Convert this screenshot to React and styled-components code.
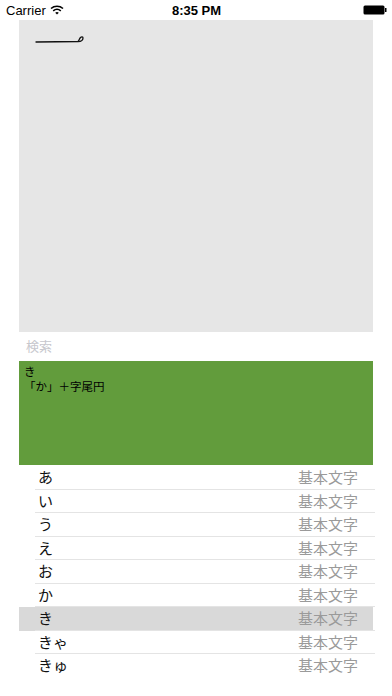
import React from "react";
import styled, { createGlobalStyle } from "styled-components";

const Global = createGlobalStyle`
  html, body { margin: 0; padding: 0; background: #fff; }
  body { font-family: "Liberation Sans", "Noto Sans CJK JP", sans-serif; }
  * { box-sizing: border-box; }
`;

const Screen = styled.div`
  width: 392px;
  height: 696px;
  overflow: hidden;
  background: #fff;
  display: flex;
  flex-direction: column;
`;

const StatusBar = styled.div`
  height: 20px;
  display: grid;
  grid-template-columns: 1fr auto 1fr;
  align-items: center;
  padding: 0 5px 0 6px;
  font-size: 13px;
  color: #000;
`;

const StatusLeft = styled.div`
  display: flex;
  align-items: center;
  gap: 4px;
`;

const Clock = styled.div`
  font-weight: bold;
  font-size: 13px;
`;

const StatusRight = styled.div`
  display: flex;
  justify-content: flex-end;
  align-items: center;
`;

const Body = styled.div`
  width: 354px;
  margin-left: 19px;
  display: flex;
  flex-direction: column;
`;

const Canvas = styled.div`
  height: 312px;
  background: #e6e6e6;
  position: relative;
`;

const Stroke = styled.svg`
  position: absolute;
  left: 15px;
  top: 13px;
`;

const Search = styled.div`
  height: 29px;
  background: #fff;
  display: flex;
  align-items: center;
  padding: 0 0 3px 7px;
  font-family: "Noto Sans CJK JP", sans-serif;
  font-size: 13px;
  color: #c7c7cd;
`;

const Detail = styled.div`
  height: 104px;
  background: #629c3c;
  padding: 3px 0 0 5px;
  font-family: "Noto Sans CJK JP", sans-serif;
  font-size: 11.5px;
  line-height: 15px;
  color: #000;
`;

const List = styled.div`
  display: flex;
  flex-direction: column;
  margin-top: 1px;
`;

const Row = styled.div`
  height: 23.5px;
  display: flex;
  align-items: center;
  justify-content: space-between;
  padding: 0 15px 2px 19px;
  background: ${p => (p.$selected ? "#d9d9d9" : "#fff")};
  position: relative;
  font-family: "Noto Sans CJK JP", sans-serif;
  font-size: 15px;
  &::after {
    content: "";
    position: absolute;
    left: 16px;
    right: -2px;
    bottom: 0;
    height: 1px;
    background: ${p => (p.$last ? "transparent" : "#e4e4e4")};
  }
`;

const Kana = styled.span`
  color: #111;
`;

const Kind = styled.span`
  color: #9a9a9a;
`;

const rows = ["あ", "い", "う", "え", "お", "か", "き", "きゃ", "きゅ"];

export default function App() {
  return (
    <Screen>
      <Global />
      <StatusBar>
        <StatusLeft>
          <span>Carrier</span>
          <svg width="14" height="10" viewBox="0 0 14 10">
            <path d="M1 3.5 A9 9 0 0 1 13 3.5" stroke="#000" strokeWidth="1.6" fill="none" />
            <path d="M3.2 5.8 A6 6 0 0 1 10.8 5.8" stroke="#000" strokeWidth="1.6" fill="none" />
            <path d="M7 9.5 L5.2 7.8 A2.6 2.6 0 0 1 8.8 7.8 Z" fill="#000" />
          </svg>
        </StatusLeft>
        <Clock>8:35 PM</Clock>
        <StatusRight>
          <svg width="24" height="10" viewBox="0 0 24 10">
            <rect x="0.5" y="0.5" width="21" height="9" rx="1.5" fill="#000" />
            <rect x="22" y="3" width="1.5" height="4" fill="#000" />
          </svg>
        </StatusRight>
      </StatusBar>
      <Body>
        <Canvas>
          <Stroke width="60" height="20" viewBox="0 0 60 20">
            <path
              d="M2 9 L44 8.5 C47 8.5 49 7 49 5 C49 3.5 47.5 3.5 46.5 4.5 C45.5 5.5 45 7.5 44 8.5"
              stroke="#111"
              strokeWidth="1.3"
              fill="none"
              strokeLinecap="round"
            />
          </Stroke>
        </Canvas>
        <Search>検索</Search>
        <Detail>
          <div>き</div>
          <div>「か」＋字尾円</div>
        </Detail>
        <List>
          {rows.map((r, i) => (
            <Row key={r} $selected={r === "き"} $last={i === rows.length - 1}>
              <Kana>{r}</Kana>
              <Kind>基本文字</Kind>
            </Row>
          ))}
        </List>
      </Body>
    </Screen>
  );
}
